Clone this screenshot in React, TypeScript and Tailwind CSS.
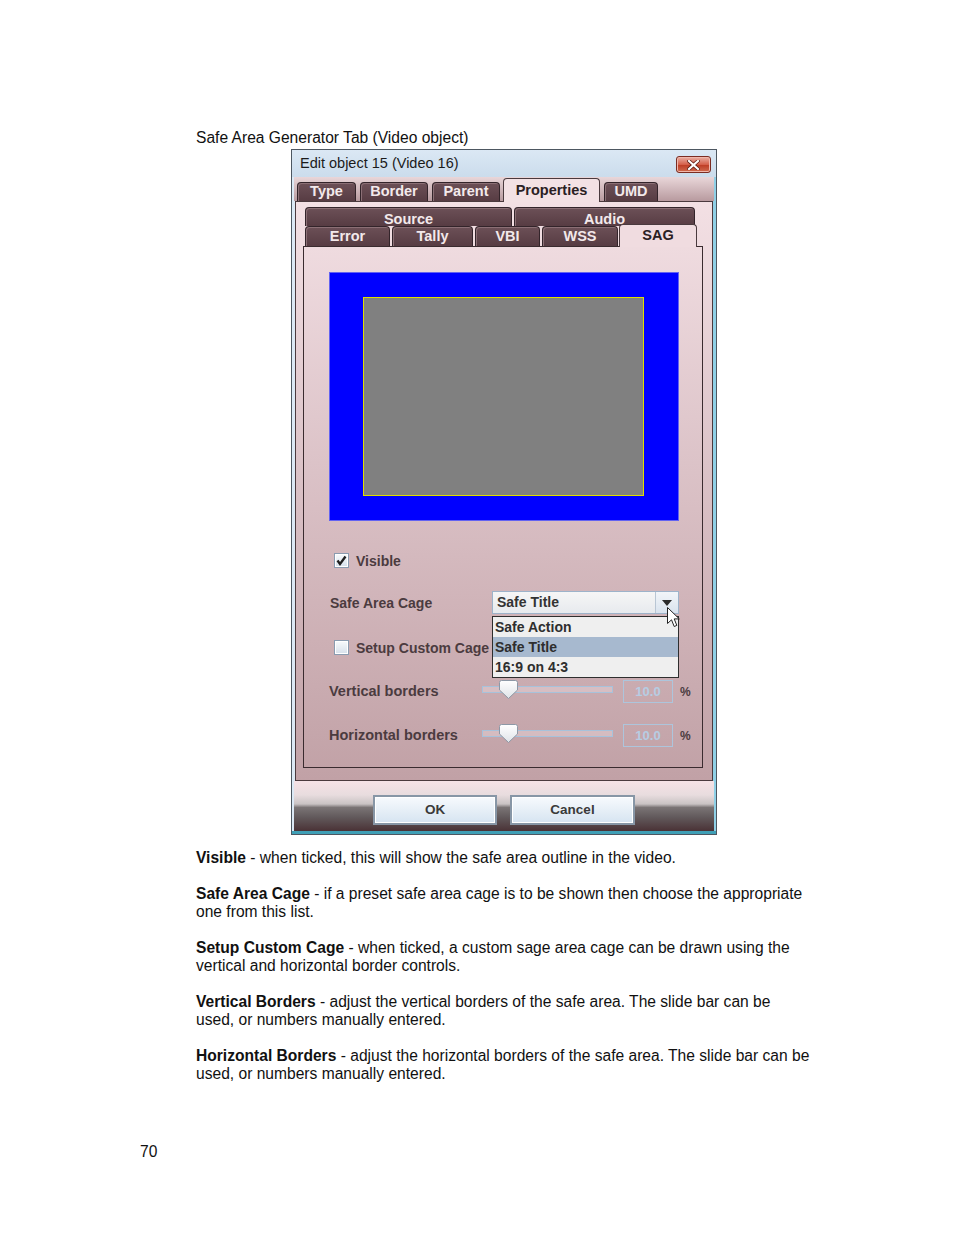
import React from 'react';

const darkTab =
  'flex items-center justify-center rounded-t-[4px] border border-b-0 border-[#33242a] bg-[linear-gradient(to_bottom,#6c5057,#573c43)] text-[#f3e9eb] font-bold shadow-[inset_1px_1px_0_#8b6f75]';

const CheckBox: React.FC<{ checked?: boolean }> = ({ checked }) => (
  <div className="w-[15px] h-[15px] shrink-0 border border-[#8a9bb0] bg-[linear-gradient(to_bottom,#f8fafc,#d6e0eb)] shadow-[inset_0_0_0_1px_#ffffff] flex items-center justify-center">
    {checked && (
      <svg width="11" height="11" viewBox="0 0 11 11">
        <path d="M1.5 5.5 L4 9 L9.5 1.5" fill="none" stroke="#1f1f1f" strokeWidth="2.3" strokeLinejoin="miter" />
      </svg>
    )}
  </div>
);

const Slider: React.FC = () => (
  <div className="relative w-[131px] h-[23px]">
    <div className="mt-[6px] w-full h-[7px] border border-[#a7c2db] bg-[#e6d2d6]/50" />
    <svg className="absolute left-[17px] top-0" width="19" height="19" viewBox="0 0 19 19">
      <defs>
        <linearGradient id="thumb" x1="0" y1="0" x2="0" y2="1">
          <stop offset="0" stopColor="#ffffff" />
          <stop offset="1" stopColor="#dfe3e8" />
        </linearGradient>
      </defs>
      <path d="M2.5 0.5 H16.5 Q18.5 0.5 18.5 2.5 V10 L9.5 18.5 L0.5 10 V2.5 Q0.5 0.5 2.5 0.5 Z" fill="url(#thumb)" stroke="#8d98a6" />
    </svg>
  </div>
);

const BorderRow: React.FC<{ label: string; className?: string }> = ({ label, className = '' }) => (
  <div className={`flex items-center h-[23px] pl-[25px] ${className}`}>
    <div className="w-[153px] text-[14.5px] font-bold text-[#4b3b3f] leading-none">{label}</div>
    <Slider />
    <div className="ml-[10px] w-[50px] h-[23px] border border-[#adc5dc] flex items-center justify-center text-[13px] font-bold text-[#b6cde3]">
      10.0
    </div>
    <div className="ml-[7px] text-[12px] font-bold text-[#4b3b3f]">%</div>
  </div>
);

const Cursor: React.FC = () => (
  <svg className="absolute left-[175px] top-[16px] z-30" width="14" height="21" viewBox="0 0 14 21">
    <path d="M0.5 0.5 L0.5 16.5 L4.5 12.8 L7.2 19.5 L9.8 18.4 L7.2 11.9 L12.3 11.9 Z" fill="#ffffff" stroke="#222222" strokeWidth="1" strokeLinejoin="round" />
  </svg>
);

const Dialog: React.FC = () => (
  <div className="ml-[291px] mt-[2px] w-[426px] h-[686px] border border-[#4d5761] bg-[linear-gradient(to_right,#dce9f5,#c7dbee_60%,#8fd0e6)] flex flex-col">
    {/* title bar */}
    <div className="h-[27px] flex items-start justify-between pl-[8px] pr-[5px] bg-[linear-gradient(to_bottom,#dbe8f4,#cbdcec)]">
      <span className="mt-[5px] text-[14.5px] leading-[17px] text-[#1b1b1b]">Edit object 15 (Video 16)</span>
      <div className="mt-[6px] w-[35px] h-[17px] rounded-[3px] border border-[#7b2c22] bg-[linear-gradient(to_bottom,#eab0a4,#d5604a_50%,#bd3a22_51%,#cf6b4f)] shadow-[inset_0_0_0_1px_#f1b7ab] flex items-center justify-center">
        <svg width="13" height="10" viewBox="0 0 13 10">
          <path d="M2 1 L11 9 M11 1 L2 9" stroke="#5b1b12" strokeWidth="3.6" strokeLinecap="square" />
          <path d="M2 1 L11 9 M11 1 L2 9" stroke="#ffffff" strokeWidth="2.2" strokeLinecap="square" />
        </svg>
      </div>
    </div>

    <div className="flex-1 flex px-[2px]">
      <div className="w-[420px] flex flex-col">
        {/* main tab strip */}
        <div className="h-[24px] flex items-end pl-[3px] bg-[linear-gradient(to_bottom,#e9d6d9,#b89a9f)] text-[14.5px]">
          <div className={`${darkTab} w-[59px] h-[19px]`}>Type</div>
          <div className={`${darkTab} ml-[4px] w-[68px] h-[19px]`}>Border</div>
          <div className={`${darkTab} ml-[4px] w-[68px] h-[19px]`}>Parent</div>
          <div className="relative z-10 -mb-[1px] ml-[3px] w-[97px] h-[24px] rounded-t-[4px] border border-b-0 border-[#4a3a3e] bg-[#f3e1e4] flex justify-center pt-[1px] font-bold text-[#2a2023]">
            Properties
          </div>
          <div className={`${darkTab} ml-[4px] w-[54px] h-[19px]`}>UMD</div>
        </div>

        {/* properties panel */}
        <div className="mx-[1px] h-[580px] border border-[#4b3a3e] bg-[linear-gradient(to_bottom,#f3e0e4,#dcc3c8_45%,#c1a1a6)] pt-[5px] pl-[7px]">
          <div className="w-[400px]">
            <div className="flex h-[19px] pl-[2px] gap-[2px] text-[14.5px]">
              <div className={`${darkTab} w-[207px] h-[19px] !items-start pt-[1px]`}>Source</div>
              <div className={`${darkTab} w-[181px] h-[19px] !items-start pt-[1px]`}>Audio</div>
            </div>
            <div className="flex h-[20px] pl-[2px] text-[14.5px]">
              <div className={`${darkTab} w-[85px] h-[20px]`}>Error</div>
              <div className={`${darkTab} ml-[2px] w-[81px] h-[20px]`}>Tally</div>
              <div className={`${darkTab} ml-[2px] w-[65px] h-[20px]`}>VBI</div>
              <div className={`${darkTab} ml-[2px] w-[76px] h-[20px]`}>WSS</div>
              <div className="relative z-10 -mt-[2px] ml-[1px] w-[78px] h-[23px] rounded-t-[4px] border border-b-0 border-[#4a3a3e] bg-[#f0dce0] flex justify-center pt-0 font-bold text-[#2a2023]">
                SAG
              </div>
            </div>

            {/* SAG page */}
            <div className="w-[400px] h-[522px] border border-[#3a2b2f]">
              <div className="ml-[25px] mt-[25px] w-[350px] h-[249px] bg-[#0000ff] shadow-[inset_0_0_0_1px_#6262f2] pt-[25px] pl-[34px]">
                <div className="w-[281px] h-[199px] bg-[#808080] border border-[#dede00]" />
              </div>

              <div className="mt-[28px] h-[23px] pl-[30px] flex items-center gap-[7px]">
                <CheckBox checked />
                <span className="text-[14px] font-bold text-[#4b3b3f] leading-none">Visible</span>
              </div>

              <div className="mt-[19px] h-[23px] pl-[26px] flex items-center">
                <div className="w-[162px] text-[14px] font-bold text-[#4b3b3f] leading-none">Safe Area Cage</div>
                <div className="relative w-[187px] h-[23px]">
                  <div className="w-full h-full border border-[#9db3ca] bg-[linear-gradient(to_bottom,#f6f6f6,#e7eaee)] flex">
                    <div className="flex-1 flex items-center pl-[4px] text-[14px] font-bold text-[#333333]">Safe Title</div>
                    <div className="w-[23px] border-l border-[#b9c6d4] bg-[linear-gradient(to_bottom,#f2f5f9,#d9e3ee)] flex items-center justify-center">
                      <svg width="10" height="6" viewBox="0 0 10 6">
                        <path d="M0 0 H10 L5 6 Z" fill="#2b2b2b" />
                      </svg>
                    </div>
                  </div>
                  <Cursor />
                  <div className="absolute z-20 left-0 top-[25px] w-[187px] h-[62px] border border-[#2e2e2e] bg-[#efefef] text-[14px] font-bold text-[#2e2e2e]">
                    <div className="h-[20px] pl-[2px] flex items-center">Safe Action</div>
                    <div className="h-[20px] pl-[2px] flex items-center bg-[#a7b9cf]">Safe Title</div>
                    <div className="h-[20px] pl-[2px] flex items-center">16:9 on 4:3</div>
                  </div>
                </div>
              </div>

              <div className="mt-[22px] h-[23px] pl-[30px] flex items-center gap-[7px]">
                <CheckBox />
                <span className="text-[14px] font-bold text-[#4b3b3f] leading-none whitespace-nowrap">Setup Custom Cage</span>
              </div>

              <BorderRow label="Vertical borders" className="mt-[21px]" />
              <BorderRow label="Horizontal borders" className="mt-[21px]" />
            </div>
          </div>
        </div>

        {/* buttons */}
        <div className="h-[50px] flex justify-center gap-[13px] pt-[14px] bg-[linear-gradient(to_bottom,#f6e2e6,#e8dcde_28%,#c9c3c4_46%,#7a7475_53%,#625a5c_72%,#4a3236)]">
          <div className="w-[124px] h-[30px] border-2 border-[#8796a6] bg-[linear-gradient(to_bottom,#f7fafd,#d6e4f1)] shadow-[inset_0_0_0_1px_#ffffff] flex items-center justify-center text-[13.5px] font-bold text-[#3a3a3a]">
            OK
          </div>
          <div className="w-[125px] h-[30px] border-2 border-[#8796a6] bg-[linear-gradient(to_bottom,#f7fafd,#d6e4f1)] shadow-[inset_0_0_0_1px_#ffffff] flex items-center justify-center text-[13.5px] font-bold text-[#3a3a3a]">
            Cancel
          </div>
        </div>
      </div>
    </div>
    <div className="h-[3px] bg-[#3f9fb6]" />
  </div>
);

const paragraphs: { term: string; lines: string[] }[] = [
  { term: 'Visible', lines: [' - when ticked, this will show the safe area outline in the video.'] },
  {
    term: 'Safe Area Cage',
    lines: [' - if a preset safe area cage is to be shown then choose the appropriate', 'one from this list.'],
  },
  {
    term: 'Setup Custom Cage',
    lines: [' - when ticked, a custom sage area cage can be drawn using the', 'vertical and horizontal border controls.'],
  },
  {
    term: 'Vertical Borders',
    lines: [' - adjust the vertical borders of the safe area. The slide bar can be', 'used, or numbers manually entered.'],
  },
  {
    term: 'Horizontal Borders',
    lines: [' - adjust the horizontal borders of the safe area. The slide bar can be', 'used, or numbers manually entered.'],
  },
];

export default function App() {
  return (
    <div className="w-[954px] h-[1235px] bg-white text-[#111111] font-['Liberation_Sans',Arial,sans-serif]">
      <div className="pt-[129px] pl-[196px] text-[15.6px] leading-[18px]">Safe Area Generator Tab (Video object)</div>
      <Dialog />
      <div className="mt-[14px] pl-[196px] text-[15.6px] leading-[18px]">
        {paragraphs.map((p) => (
          <p key={p.term} className="mb-[18px] whitespace-nowrap">
            <b>{p.term}</b>
            {p.lines[0]}
            {p.lines[1] && (
              <>
                <br />
                {p.lines[1]}
              </>
            )}
          </p>
        ))}
      </div>
      <div className="mt-[60px] pl-[140px] text-[15.6px] leading-[18px]">70</div>
    </div>
  );
}
